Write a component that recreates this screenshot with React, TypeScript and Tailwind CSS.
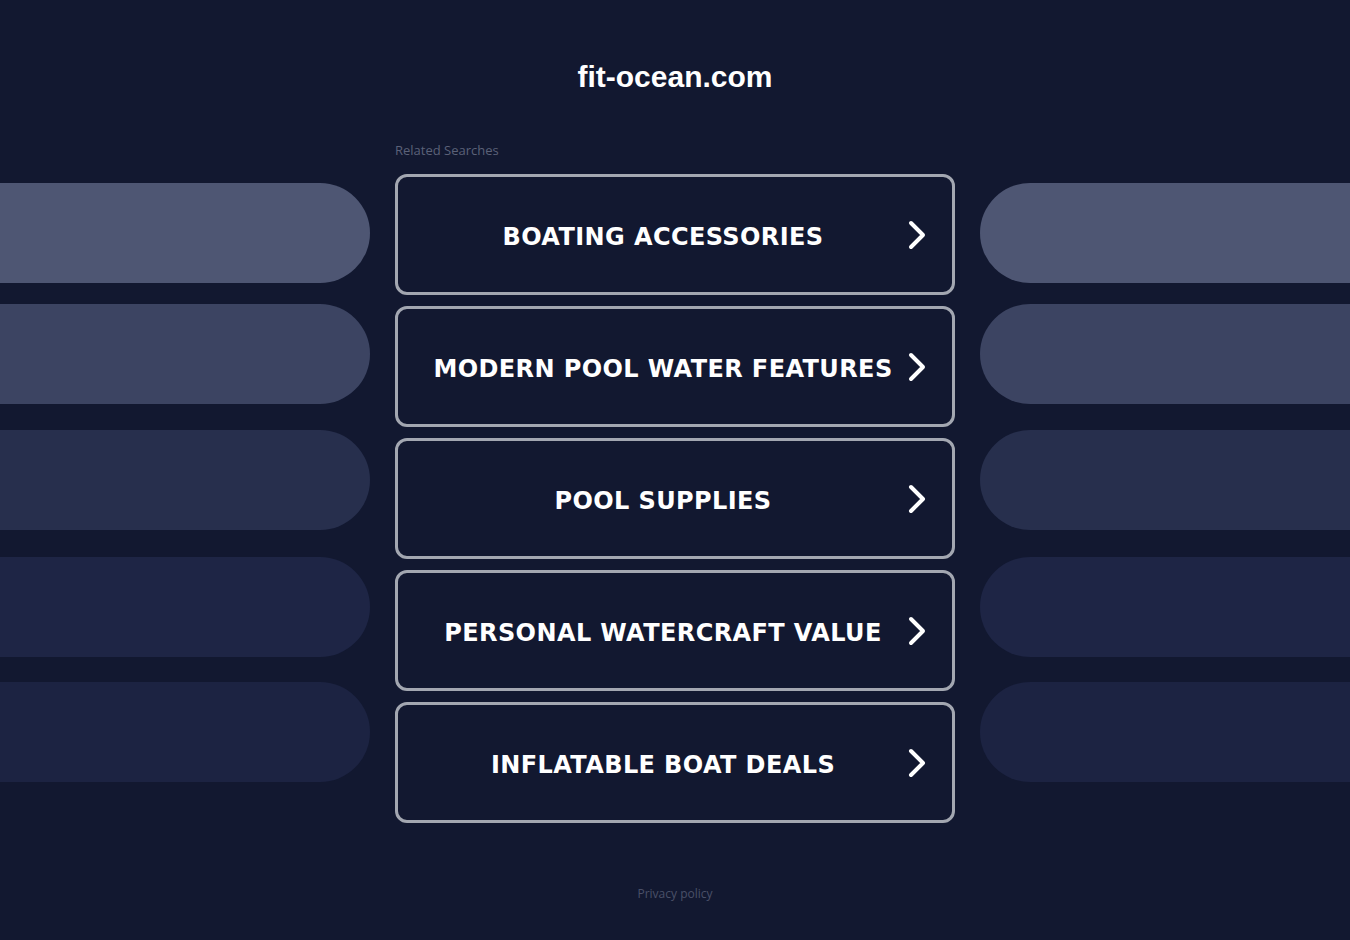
import React from "react";

const items = [
  "BOATING ACCESSORIES",
  "MODERN POOL WATER FEATURES",
  "POOL SUPPLIES",
  "PERSONAL WATERCRAFT VALUE",
  "INFLATABLE BOAT DEALS",
];

const pills = [
  "bg-[#4e5673]",
  "mt-[21px] bg-[#3c4462]",
  "mt-[26px] bg-[#272f4d]",
  "mt-[27px] bg-[#1e2545]",
  "mt-[25px] bg-[#1c2342]",
];

function Chevron() {
  return (
    <svg width="22" height="30" viewBox="0 0 22 30" fill="none" className="shrink-0">
      <path d="M5 3 L17 15 L5 27" stroke="white" strokeWidth="4" strokeLinecap="round" strokeLinejoin="round" />
    </svg>
  );
}

export default function App() {
  return (
    <div className="min-h-[940px] w-full overflow-hidden bg-[#121830] font-['Liberation_Sans',Arial,sans-serif]">
      <div className="pt-[58px] text-center">
        <h1 className="text-[30px] leading-[38px] font-bold text-white">fit-ocean.com</h1>
      </div>
      <div className="mt-[46px] flex justify-between">
        <div className="w-[370px] pt-[41px] flex flex-col">
          {pills.map((c, i) => (
            <div key={i} className={`h-[100px] w-full rounded-r-[50px] ${c}`} />
          ))}
        </div>
        <div className="w-[560px]">
          <div className="h-[16px] text-[13px] leading-[16px] text-[#5b6178] font-['Open_Sans',sans-serif]">Related Searches</div>
          <div className="mt-[16px] flex flex-col gap-[11px]">
            {items.map((t) => (
              <div
                key={t}
                className="h-[121px] rounded-[12px] border-[3px] border-[#a3a7b1] flex items-center justify-center relative"
              >
                <span className="mt-[4px] text-white font-bold text-[24px] tracking-[0.4px] font-['DejaVu_Sans',Verdana,sans-serif] pr-[24px]">
                  {t}
                </span>
                <div className="absolute right-[24px] top-1/2 -translate-y-1/2">
                  <Chevron />
                </div>
              </div>
            ))}
          </div>
          <div className="mt-[63px] text-center text-[12px] leading-[16px] text-[#4a5068] font-['Open_Sans',sans-serif]">
            Privacy policy
          </div>
        </div>
        <div className="w-[370px] pt-[41px] flex flex-col">
          {pills.map((c, i) => (
            <div key={i} className={`h-[100px] w-full rounded-l-[50px] ${c}`} />
          ))}
        </div>
      </div>
    </div>
  );
}
